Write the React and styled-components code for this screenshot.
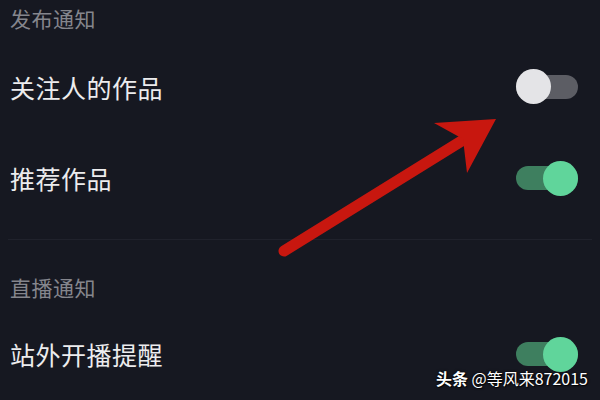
import React from "react";
import styled, { createGlobalStyle } from "styled-components";

const GlobalStyle = createGlobalStyle`
  html, body {
    margin: 0;
    padding: 0;
    background: #161821;
    overflow: hidden;
  }
`;

const Page = styled.div`
  position: relative;
  width: 600px;
  height: 400px;
  box-sizing: border-box;
  padding: 0 22px 0 10px;
  background: #161821;
  font-family: "Noto Sans CJK SC", "Noto Sans", sans-serif;
  display: flex;
  flex-direction: column;
  overflow: hidden;
`;

const SectionTitle = styled.div`
  height: 36px;
  display: flex;
  align-items: center;
  margin-top: ${(p) => p.$top || 0}px;
  margin-bottom: ${(p) => p.$bottom || 0}px;
  font-size: 21px;
  color: #85868d;
  letter-spacing: 0.5px;
`;

const Row = styled.div`
  height: 92px;
  display: flex;
  align-items: center;
  justify-content: space-between;
`;

const Label = styled.span`
  font-size: 25px;
  color: #ececee;
  letter-spacing: 0.5px;
`;

const Divider = styled.div`
  height: 1px;
  margin: 15px -14px 0 -2px;
  background: #20222c;
`;

const Track = styled.div`
  position: relative;
  width: 62px;
  height: 24px;
  border-radius: 12px;
  background: ${(p) => (p.$on ? "#3e7f5f" : "#5c5d64")};
`;

const Knob = styled.div`
  position: absolute;
  top: 50%;
  width: 35px;
  height: 35px;
  margin-top: -17.5px;
  border-radius: 50%;
  background: ${(p) => (p.$on ? "#60d59b" : "#e4e4e7")};
  ${(p) => (p.$on ? "right: 0;" : "left: 0;")}
`;

const Toggle = ({ on }) => (
  <Track $on={on}>
    <Knob $on={on} />
  </Track>
);

const ArrowLayer = styled.svg`
  position: absolute;
  left: 0;
  top: 0;
  pointer-events: none;
`;

const Watermark = styled.div`
  position: absolute;
  right: 12px;
  bottom: 10px;
  font-family: "Noto Sans CJK SC", "Liberation Sans", sans-serif;
  font-size: 16px;
  color: #ffffff;
  text-shadow: 0 0 3px rgba(0, 0, 0, 0.9), 1px 1px 1px rgba(0, 0, 0, 0.8);
  b {
    font-weight: 700;
  }
`;

export default function App() {
  return (
    <Page>
      <GlobalStyle />
      <SectionTitle $bottom={5}>发布通知</SectionTitle>
      <Row>
        <Label>关注人的作品</Label>
        <Toggle on={false} />
      </Row>
      <Row>
        <Label>推荐作品</Label>
        <Toggle on />
      </Row>
      <Divider />
      <SectionTitle $top={29} $bottom={3}>直播通知</SectionTitle>
      <Row>
        <Label>站外开播提醒</Label>
        <Toggle on />
      </Row>

      <ArrowLayer width="600" height="400" viewBox="0 0 600 400">
        <line
          x1="284"
          y1="251"
          x2="468"
          y2="137"
          stroke="#c8170f"
          strokeWidth="11"
          strokeLinecap="round"
        />
        <polygon points="496,119 434,123 463,139 467,173" fill="#c8170f" />
      </ArrowLayer>

      <Watermark>
        <b>头条</b> @等风来872015
      </Watermark>
    </Page>
  );
}
